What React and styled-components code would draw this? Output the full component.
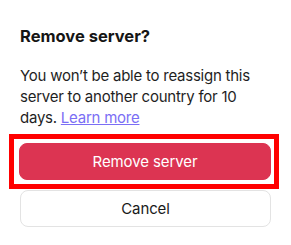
import React from "react";
import styled, { createGlobalStyle } from "styled-components";

const GlobalStyle = createGlobalStyle`
  body {
    margin: 0;
    background: #ffffff;
    font-family: Inter, "Noto Sans", sans-serif;
  }
`;

const Dialog = styled.div`
  width: 291px;
  height: 245px;
  box-sizing: border-box;
  padding: 26px 20px 0 20px;
  display: flex;
  flex-direction: column;
`;

const Title = styled.h2`
  margin: 0;
  font-size: 16.5px;
  line-height: 20px;
  font-weight: 700;
  color: #151515;
`;

const Message = styled.p`
  margin: 19px 0 0 0;
  font-size: 15px;
  line-height: 21px;
  letter-spacing: -0.24px;
  color: #1f1f1f;

  a {
    color: #7b6ef5;
    text-decoration: underline;
    text-decoration-thickness: 1px;
  }
`;

const Highlight = styled.div`
  margin: 6px -8px 1px -11px;
  padding: 4px 3px 4px 5px;
  border: 5px solid #ff0000;
`;

const Button = styled.button`
  width: 100%;
  height: 37px;
  border-radius: 8px;
  font-family: Inter, "Noto Sans", sans-serif;
  font-size: 15px;
  letter-spacing: -0.1px;
  cursor: pointer;
  border: 1px solid ${(props) => (props.danger ? "#dc3452" : "#e3e3e3")};
  background: ${(props) => (props.danger ? "#dc3452" : "#ffffff")};
  color: ${(props) => (props.danger ? "#ffffff" : "#1a1a1a")};
`;

const App = () => {
  return (
    <>
      <GlobalStyle />
      <Dialog>
        <Title>Remove server?</Title>
        <Message>
          You won’t be able to reassign this server to another country for 10
          days. <a href="#learn">Learn more</a>
        </Message>
        <Highlight>
          <Button danger>Remove server</Button>
        </Highlight>
        <Button>Cancel</Button>
      </Dialog>
    </>
  );
};

export default App;
